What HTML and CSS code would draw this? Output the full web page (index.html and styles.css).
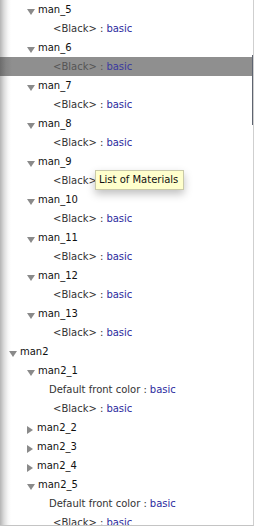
FILE: index.html
```html
<!DOCTYPE html>
<html lang="en">
<head>
    <meta charset="UTF-8">
    <meta name="viewport" content="width=device-width, initial-scale=1.0">
    <title>Materials</title>
    <link rel="stylesheet" href="styles.css">
</head>
<body>
    <div class="outline">
        <div class="scroll-edge"></div>
        <div class="row lvl1"><span class="tri down"></span>man_5</div>
        <div class="row leaf">&lt;Black&gt; : <span class="val">basic</span></div>
        <div class="row lvl1"><span class="tri down"></span>man_6</div>
        <div class="row leaf selected">&lt;Black&gt; : <span class="val">basic</span></div>
        <div class="row lvl1"><span class="tri down"></span>man_7</div>
        <div class="row leaf">&lt;Black&gt; : <span class="val">basic</span></div>
        <div class="row lvl1"><span class="tri down"></span>man_8</div>
        <div class="row leaf">&lt;Black&gt; : <span class="val">basic</span></div>
        <div class="row lvl1"><span class="tri down"></span>man_9</div>
        <div class="row leaf">&lt;Black&gt; : <span class="val">basic</span></div>
        <div class="row lvl1"><span class="tri down"></span>man_10</div>
        <div class="row leaf">&lt;Black&gt; : <span class="val">basic</span></div>
        <div class="row lvl1"><span class="tri down"></span>man_11</div>
        <div class="row leaf">&lt;Black&gt; : <span class="val">basic</span></div>
        <div class="row lvl1"><span class="tri down"></span>man_12</div>
        <div class="row leaf">&lt;Black&gt; : <span class="val">basic</span></div>
        <div class="row lvl1"><span class="tri down"></span>man_13</div>
        <div class="row leaf">&lt;Black&gt; : <span class="val">basic</span></div>
        <div class="row lvl0"><span class="tri down"></span>man2</div>
        <div class="row lvl1"><span class="tri down"></span>man2_1</div>
        <div class="row leaf text">Default front color : <span class="val">basic</span></div>
        <div class="row leaf">&lt;Black&gt; : <span class="val">basic</span></div>
        <div class="row lvl1"><span class="tri right"></span>man2_2</div>
        <div class="row lvl1"><span class="tri right"></span>man2_3</div>
        <div class="row lvl1"><span class="tri right"></span>man2_4</div>
        <div class="row lvl1"><span class="tri down"></span>man2_5</div>
        <div class="row leaf text">Default front color : <span class="val">basic</span></div>
        <div class="row leaf">&lt;Black&gt; : <span class="val">basic</span></div>

        <div class="tooltip">List of Materials</div>
    </div>
</body>
</html>
```

FILE: styles.css
```css
body {
    margin: 0;
    overflow: hidden;
    background: #fff;
}

.outline {
    position: relative;
    width: 253px;
    height: 525px;
    border-right: 1px solid #cfcfcf;
    border-bottom: 1px solid #c4c4c4;
    overflow: hidden;
    font-family: "DejaVu Sans", Verdana, sans-serif;
    font-size: 10px;
    color: #111;
    background: linear-gradient(to right, #b4b4b4 0, #dcdcdc 4px, #f6f6f6 8px, #fff 11px);
}

.row {
    height: 19px;
    display: flex;
    align-items: center;
    white-space: nowrap;
}

.row:first-of-type {
    margin-top: -1px;
}

.lvl0 {
    padding-left: 9px;
}

.lvl1 {
    padding-left: 27px;
}

.leaf {
    padding-left: 53px;
    color: #333;
}

.leaf.text {
    padding-left: 49px;
}

.val {
    color: #2b2b9e;
    margin-left: 3px;
}

.selected {
    background: linear-gradient(to right, #6c6c6c 0, #858585 6px, #8f8f8f 12px);
    color: #555;
}

.selected .val {
    color: #3a3aa0;
}

.tri {
    width: 0;
    height: 0;
    margin-right: 3px;
    position: relative;
    top: 2px;
}

.tri.down {
    border-left: 4px solid transparent;
    border-right: 4px solid transparent;
    border-top: 6px solid #8a8a8a;
}

.tri.right {
    border-top: 4px solid transparent;
    border-bottom: 4px solid transparent;
    border-left: 6px solid #8a8a8a;
    margin-right: 4px;
}

.scroll-edge {
    position: absolute;
    right: 0;
    top: 55px;
    width: 1px;
    height: 70px;
    background: #5e6470;
}

.tooltip {
    position: absolute;
    left: 95px;
    top: 170px;
    width: 84px;
    height: 18px;
    line-height: 18px;
    padding-left: 3px;
    border: 1px solid #c9c9a8;
    background: #ffffcc;
    color: #111;
    font-size: 10px;
    box-shadow: 0 4px 8px rgba(0, 0, 0, 0.25);
    box-sizing: content-box;
    white-space: nowrap;
}
```
